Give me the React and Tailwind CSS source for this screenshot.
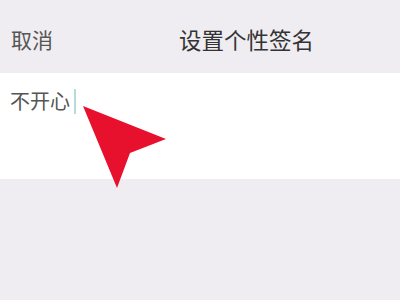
import React from 'react';

export default function App() {
  return (
    <div className="relative w-[400px] h-[300px] overflow-hidden bg-[#efedf1] font-['Noto_Sans_CJK_SC','Noto_Sans',sans-serif]">
      {/* top bar */}
      <div className="h-[73px] flex items-center pt-[6px] pl-[11px]">
        <span className="text-[21px] leading-none text-[#555]">取消</span>
        <span className="ml-[126px] text-[22.5px] leading-none text-[#333]">设置个性签名</span>
      </div>

      {/* signature input */}
      <div className="h-[106px] bg-white pt-[14px] pl-[10px]">
        <div className="flex items-center h-[28px]">
          <span className="text-[20px] leading-[28px] text-[#555]">不开心</span>
          <span className="ml-[4px] w-[2px] h-[25px] bg-[#b5dcd9]" />
        </div>
      </div>

      {/* pointer overlay */}
      <svg className="absolute left-0 top-0" width="400" height="300" viewBox="0 0 400 300">
        <polygon points="83,106 166,139 130,153 117,188" fill="#e8112d" />
      </svg>
    </div>
  );
}
